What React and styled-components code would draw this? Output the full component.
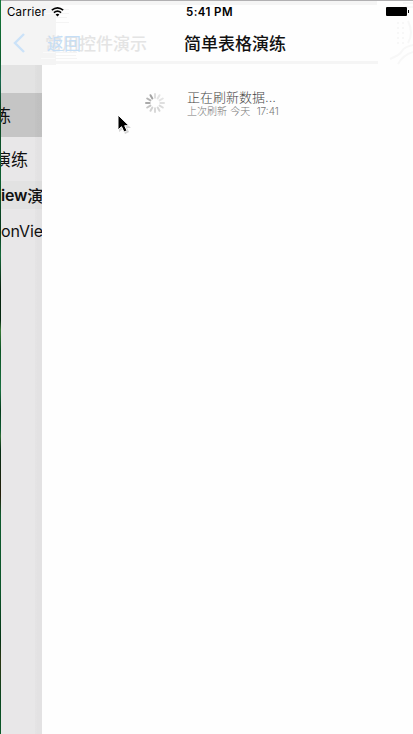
import React from "react";
import styled, { createGlobalStyle } from "styled-components";

const Global = createGlobalStyle`
  * { box-sizing: border-box; }
  body { margin: 0; background: #fefefe; overflow: hidden; }
`;
const Screen = styled.div`
  position: relative;
  width: 413px;
  height: 734px;
  display: flex;
  overflow: hidden;
  background: #fefefe;
  font-family: Inter, "Noto Sans CJK SC", sans-serif;
  color: #111;
  white-space: nowrap;
`;
const DesktopEdge = styled.div`
  flex: 0 0 1px;
  background: linear-gradient(#147a3a 0, #0d5c2c 60px, #1a6a50 80px, #0a4320 110px, #0d6030 180px, #07381c 230px, #14693a 255px, #06200c 290px, #03280f 320px, #397a36 330px, #0a5423 350px, #187040 390px, #033a1a 410px, #0a5a30 430px, #2d6a30 436px, #042e15 450px, #251d08 495px, #0d5a2d 515px, #0b5529 590px, #033414 640px, #2b3511 660px, #07471f 700px, #0b5b28 734px);
`;
const Phone = styled.div`
  flex: 1;
  min-width: 0;
  display: flex;
  flex-direction: column;
`;
const Header = styled.header`
  height: 65px;
  flex: none;
  position: relative;
  border-top: 1px solid #b1b0b2;
  background: linear-gradient(90deg, #f4f4f4 55px, #fefefe 55px);
`;
const HeaderBand = styled.div`
  position: absolute;
  left: 55px;
  top: ${(p) => p.$top}px;
  width: ${(p) => p.$width}px;
  height: ${(p) => p.$height}px;
  background: #f5f5f5;
`;
const Streaks = styled.svg`
  position: absolute;
  left: 40px;
  top: 0;
`;
const StatusBar = styled.div`
  position: relative;
  height: 21px;
  display: grid;
  grid-template-columns: 1fr auto 1fr;
  align-items: center;
  padding: 0 3px 0 6px;
  font-size: 11.5px;
  color: #000;
`;
const Carrier = styled.div`
  display: flex;
  align-items: center;
  gap: 5px;
  letter-spacing: 0.18px;
`;
const Clock = styled.div`
  font-weight: 600;
  letter-spacing: 0.4px;
  padding-left: 2px;
`;
const Battery = styled.svg`
  justify-self: end;
`;
const NavBar = styled.div`
  position: relative;
  height: 43px;
`;
const NavLabel = styled.div`
  position: absolute;
  top: 9px;
  left: ${(p) => p.$left}px;
  line-height: 26px;
  font-size: 17px;
  font-weight: ${(p) => p.$weight || 500};
  color: ${(p) => p.$color};
`;
const Chevron = styled.svg`
  position: absolute;
  left: 11px;
  top: 10px;
`;
const Ghost = styled.svg`
  position: absolute;
  right: 0;
  top: 0;
`;
const Body = styled.div`
  flex: 1;
  display: flex;
  min-height: 0;
`;
const Previous = styled.aside`
  position: relative;
  width: 41px;
  overflow: hidden;
  background: #e8e7e8;
`;
const Shade = styled.div`
  position: absolute;
  inset: 0 0 0 34px;
  background: linear-gradient(90deg, rgba(0,0,0,.015) 2px, rgba(0,0,0,.025) 2px);
`;
const Cell = styled.div`
  display: flex;
  align-items: center;
  justify-content: ${(p) => (p.$end ? "flex-end" : "flex-start")};
  height: ${(p) => p.$height}px;
  padding: 0 ${(p) => p.$end || 0}px ${(p) => p.$lift || 0}px 0;
  background: ${(p) => p.$bg || "transparent"};
  font-size: ${(p) => p.$size || 17}px;
  font-weight: ${(p) => p.$weight || 400};
  letter-spacing: ${(p) => p.$tracking || 0}px;
`;
const HeadingCjk = styled.span`
  font-weight: 500;
`;
const Current = styled.main`
  flex: 1;
`;
const Refresh = styled.div`
  display: flex;
  padding: 24px 0 0 102px;
`;
const Spinner = styled.svg`
  margin-top: 3px;
`;
const Messages = styled.div`
  margin-left: 21px;
`;
const Status = styled.div`
  font-size: 13px;
  line-height: 16px;
  font-weight: 300;
  color: #444;
`;
const Updated = styled.div`
  font-size: 10px;
  line-height: 12px;
  font-weight: 300;
  color: #777;
  word-spacing: 0.4px;
`;
const Pointer = styled.svg`
  position: absolute;
  left: 116px;
  top: 113px;
`;
const shades = ["#dedede","#e4e4e4","#e4e4e4","#dfdfdf","#dadada","#d6d6d6","#d8d8d8","#d2d2d2","#c4c4c4","#aaaaaa","#b4b4b4","#a2a2a2"];

export default function App() {
  return (
    <Screen>
      <Global />
      <DesktopEdge />
      <Phone>
        <Header>
          <HeaderBand $top={0} $width={321} $height={4} />
          <HeaderBand $top={60} $width={322} $height={3} />
          <Streaks width="40" height="64" fill="none">
            <path d="M8 8.5h20M10 12.5h18M12 16.5h14M15 21.5h13M14 51.5h22M10 54.5h25M14 57.5h22" stroke="#f4f4f4" />
            <path d="M2 8.5h12M4 12.5h8M2 51.5h12M0 57.5h14" stroke="#fafafa" />
          </Streaks>
          <Ghost width="46" height="65" fill="none" stroke="#f7f7f7" strokeWidth="2">
            <path d="M31 21v22M36 21v22" strokeDasharray="2 3" />
            <path d="M41 20q6 12 0 22M46 44q-9 2-11 6t-12 8M46 51q-10 3-15 12M36 2h10M38 6h8" />
          </Ghost>
          <StatusBar>
            <Carrier>
              Carrier
              <svg width="13" height="10" viewBox="0 0 13 10" fill="none" stroke="#000" strokeWidth="1.6">
                <path d="M.8 3.2Q6.5-1.5 12.2 3.2M2.9 5.6q3.6-2.9 7.2 0" />
                <path d="M4.6 7.4q1.9-1.5 3.8 0L6.5 9.4z" fill="#000" stroke="none" />
              </svg>
            </Carrier>
            <Clock>5:41 PM</Clock>
            <Battery width="24" height="9" viewBox="0 0 24 9">
              <rect x="0" width="21" height="9" rx="1" />
              <rect x="22" y="3" width="1" height="3" />
            </Battery>
          </StatusBar>
          <NavBar>
            <Chevron width="14" height="22" fill="none" stroke="#cbe2f8" strokeWidth="2.4">
              <path d="M12 2 3 11l9 9" />
            </Chevron>
            <NavLabel $left={44} $color="#e4e4e4">常用控件演示</NavLabel>
            <NavLabel $left={46} $weight={400} $color="#c5def6">返回</NavLabel>
            <NavLabel $left={183} $color="#111">简单表格演练</NavLabel>
          </NavBar>
        </Header>
        <Body>
          <Previous>
            <Cell $height={28} $bg="#e3e3e3" />
            <Cell $height={44} $bg="#c5c5c5" $end={31} $lift={2}>练</Cell>
            <Cell $height={44} $end={14} $lift={2}>演练</Cell>
            <Cell $height={28} $bg="#e2e2e2" $weight={600} $size={16} $tracking={-0.2}>iew<HeadingCjk>演</HeadingCjk></Cell>
            <Cell $height={44} $size={16} $tracking={-0.1}>onView</Cell>
            <Shade />
          </Previous>
          <Current>
            <Refresh>
              <Spinner width="22" height="22" viewBox="-11 -11 22 22">
                {shades.map((color, i) => (
                  <path key={i} d="M0-5.3V-9" stroke={color} strokeWidth="2" strokeLinecap="round" transform={`rotate(${i * 30})`} />
                ))}
              </Spinner>
              <Messages>
                <Status>正在刷新数据...</Status>
                <Updated>上次刷新 今天&nbsp; 17:41</Updated>
              </Messages>
            </Refresh>
          </Current>
        </Body>
      </Phone>
      <Pointer width="16" height="23" viewBox="0 0 16 23">
        <path d="M3 4v15l4-3 2 5 4-2-2-4h4z" fill="#aaa" opacity=".5" />
        <path d="M2 2v15l3.5-3.3L8 19l3-1.3-2.3-5H13z" fill="#000" stroke="#fff" />
      </Pointer>
    </Screen>
  );
}
